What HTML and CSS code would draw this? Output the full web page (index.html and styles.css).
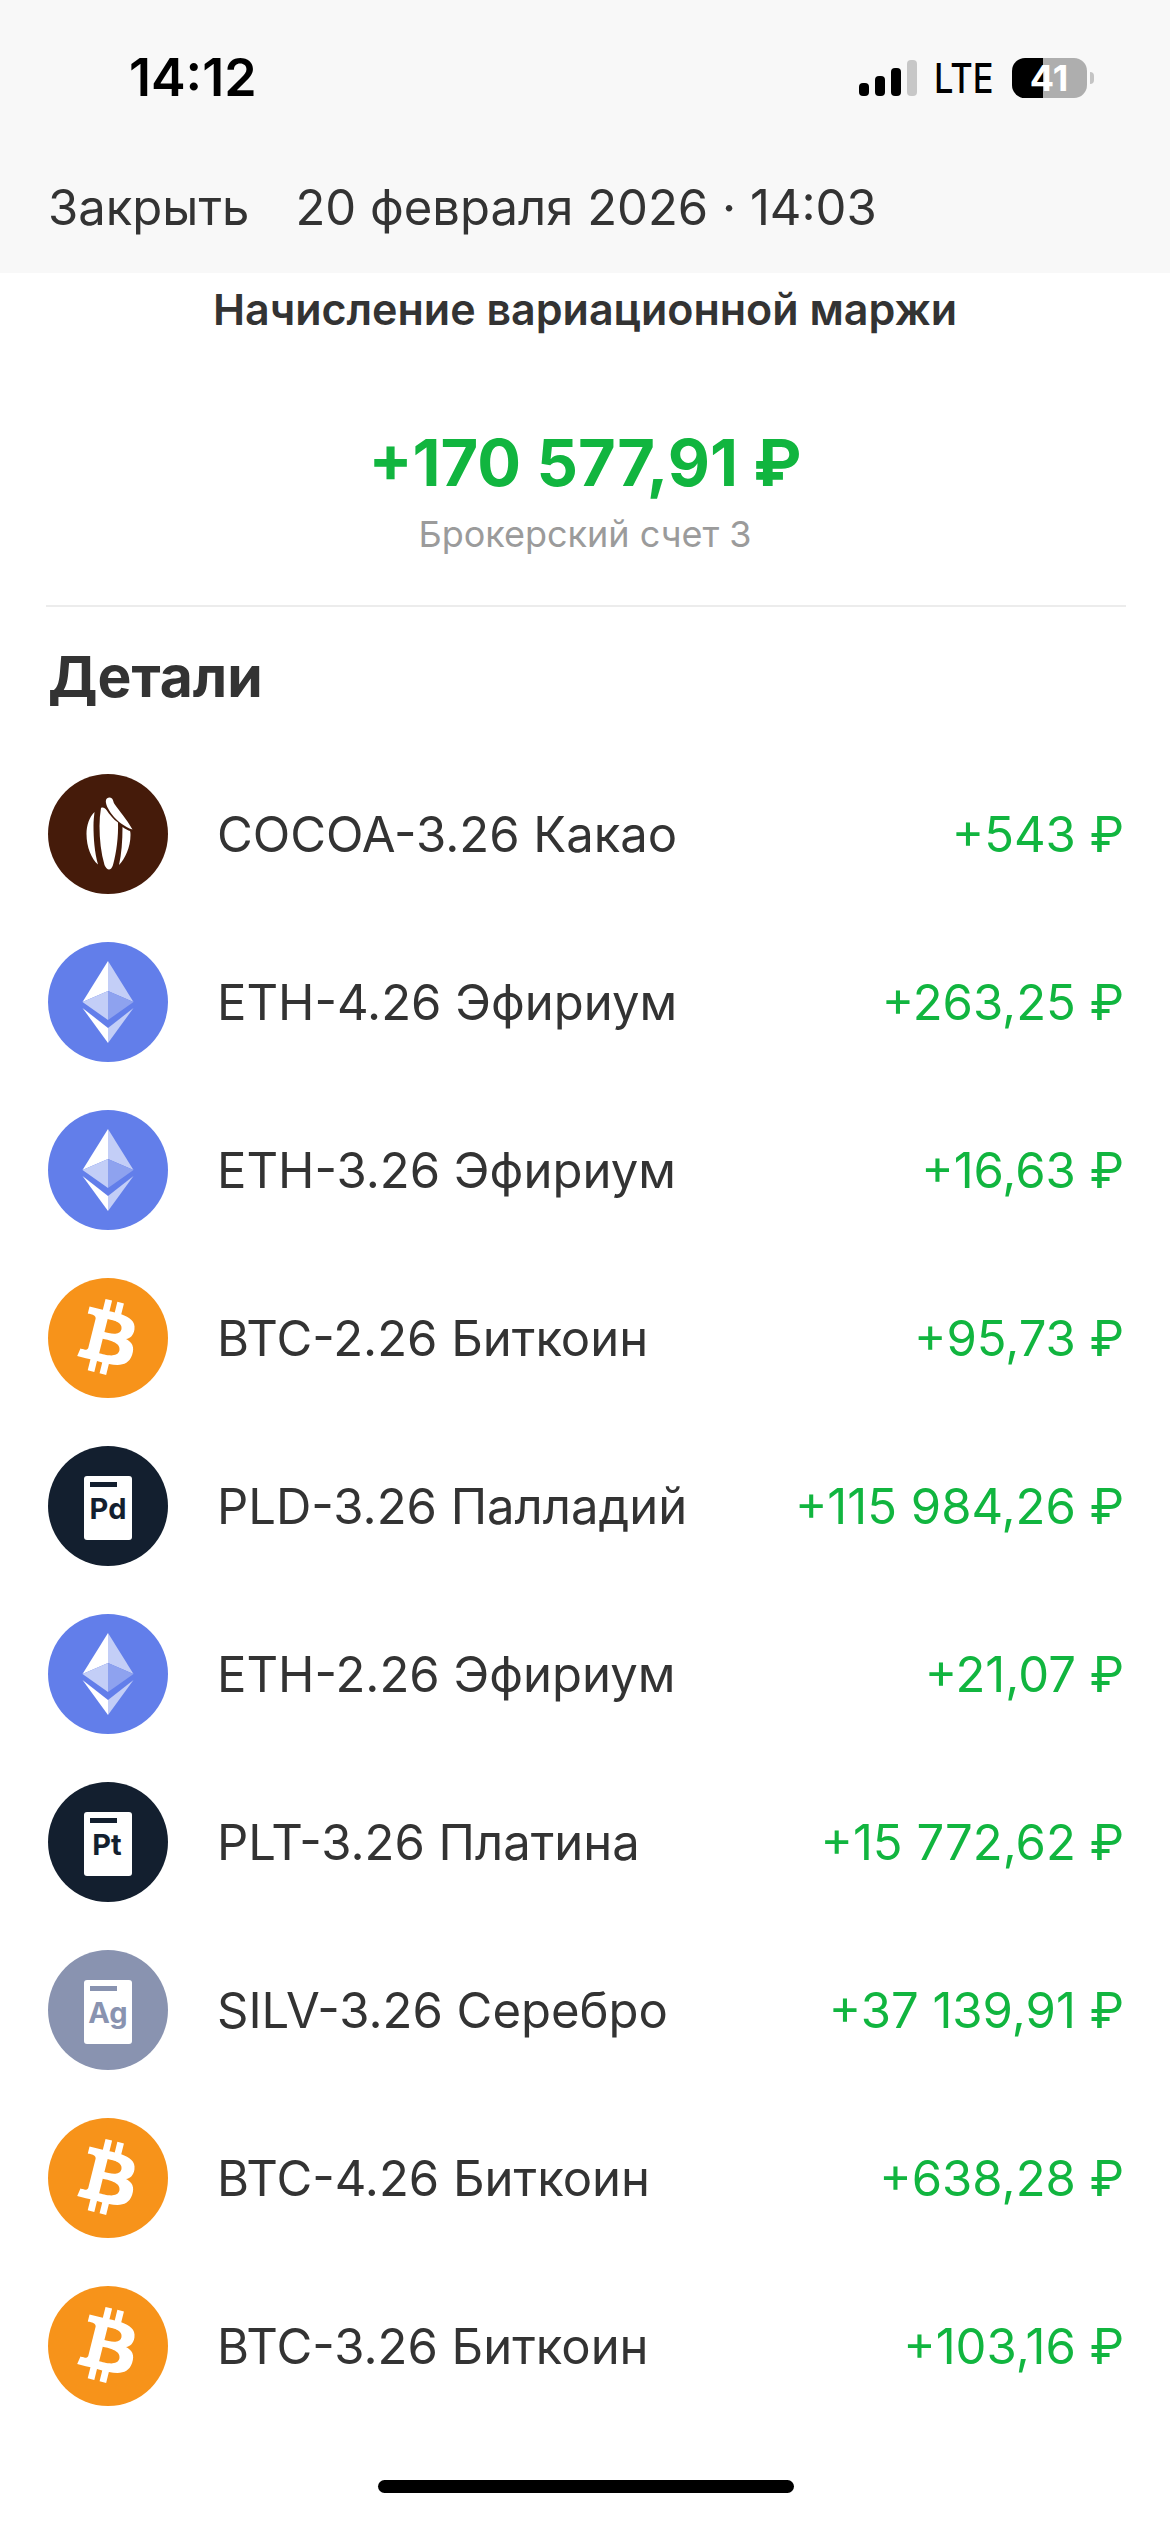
FILE: index.html
```html
<!DOCTYPE html>
<html lang="ru">
<head>
<meta charset="utf-8">
<title>Начисление вариационной маржи</title>
<link rel="stylesheet" href="styles.css">
</head>
<body>
<svg class="defs" width="0" height="0" aria-hidden="true">
  <symbol id="btc" viewBox="0 0 64 64">
    <circle cx="32" cy="32" r="32" fill="#f7931a"/>
    <path fill="#fff" d="M46.103 27.444c.637-4.258-2.605-6.547-7.038-8.074l1.438-5.768-3.511-.875-1.4 5.616c-.923-.23-1.871-.447-2.813-.662l1.41-5.653-3.509-.875-1.439 5.766c-.764-.174-1.514-.346-2.242-.527l.004-.018-4.842-1.209-.934 3.75s2.605.597 2.55.634c1.422.355 1.679 1.296 1.636 2.042l-1.638 6.571c.098.025.225.061.365.117l-.371-.092-2.296 9.205c-.174.432-.615 1.08-1.609.834.035.051-2.552-.637-2.552-.637l-1.743 4.019 4.569 1.139c.85.213 1.683.436 2.503.646l-1.453 5.834 3.507.875 1.439-5.772c.958.26 1.888.5 2.798.726l-1.434 5.745 3.511.875 1.453-5.823c5.987 1.133 10.489.676 12.384-4.739 1.527-4.36-.076-6.875-3.226-8.515 2.294-.529 4.022-2.038 4.483-5.155zm-8.022 11.249c-1.085 4.36-8.426 2.003-10.806 1.412l1.928-7.729c2.38.594 10.012 1.77 8.878 6.317zm1.086-11.312c-.99 3.966-7.1 1.951-9.082 1.457l1.748-7.008c1.982.494 8.365 1.416 7.334 5.551z"/>
  </symbol>
  <symbol id="eth" viewBox="0 0 120 120">
    <circle cx="60" cy="60" r="60" fill="#627eea"/>
    <path fill="#fff" d="M60 19 34.500 60 60 49z"/>
    <path fill="#c3cef7" d="M60 19 85.500 60 60 49z"/>
    <path fill="#c3cef7" d="M60 49 34.500 60 60 78z"/>
    <path fill="#8ea2ef" d="M60 49 85.500 60 60 78z"/>
    <path fill="#fff" d="M34.500 66 60 86v15z"/>
    <path fill="#c3cef7" d="M85.500 66 60 86v15z"/>
  </symbol>
  <symbol id="cocoa" viewBox="0 0 120 120">
    <circle cx="60" cy="60" r="60" fill="#451b0a"/>
    <path fill="#fff" d="M58 26c.5-2.500 4-3.500 6-1.500 1.500 1.500 1 3.500 2.500 5.500 5 7 12 15 18 25.500-8-2.500-15.500-8.500-20.500-15-3.500-4.500-7-11-6-14.500z"/>
    <path fill="#fff" d="M53 34c2-1 4 0 5.500 2 3 4.500 7 9.500 11.500 12.500 .5 14-1.500 30-5 42.500-1 3-2.500 4.500-4 4.500s-3.500-2-4.500-4.500C53 79 51.500 65 51.500 52c0-6 .5-12 1.500-18z"/>
    <path fill="#fff" d="M46.500 38c-5 5-8 13-8 22 0 13 5 25 11.500 30.500C46.500 78 45.500 64 45.500 52c0-5 .5-9.500 1-14z"/>
    <path fill="#fff" d="M74.500 53c3 2 5.500 3.500 7.500 4 .5 1.500.5 2.500.5 4 0 12-5.500 24-11.500 30 2.500-11 3.500-24 3.500-38z"/>
  </symbol>
</svg>

<header class="top">
  <div class="status">
    <span class="time">14:12</span>
    <div class="status-right">
      <div class="signal">
        <i class="bar b1"></i><i class="bar b2"></i><i class="bar b3"></i><i class="bar b4"></i>
      </div>
      <span class="lte">LTE</span>
      <div class="battery"><span>41</span></div>
      <i class="nub"></i>
    </div>
  </div>
  <div class="nav">
    <span class="close">Закрыть</span>
    <span class="date">20 февраля 2026 · 14:03</span>
  </div>
</header>

<main class="content">
  <h1 class="title">Начисление вариационной маржи</h1>
  <div class="sum">+170 577,91 ₽</div>
  <div class="account">Брокерский счет 3</div>
  <hr class="rule">
  <h2 class="details">Детали</h2>
  <ul class="list">
    <li class="row"><svg class="logo"><use href="#cocoa"/></svg><span class="name">COCOA-3.26 Какао</span><span class="amt">+543 ₽</span></li>
    <li class="row"><svg class="logo"><use href="#eth"/></svg><span class="name">ETH-4.26 Эфириум</span><span class="amt">+263,25 ₽</span></li>
    <li class="row"><svg class="logo"><use href="#eth"/></svg><span class="name">ETH-3.26 Эфириум</span><span class="amt">+16,63 ₽</span></li>
    <li class="row"><svg class="logo"><use href="#btc"/></svg><span class="name">BTC-2.26 Биткоин</span><span class="amt">+95,73 ₽</span></li>
    <li class="row">
      <svg class="logo" viewBox="0 0 120 120"><circle cx="60" cy="60" r="60" class="dark"/><rect x="36" y="30" width="48" height="64" rx="3" fill="#fff"/><rect x="42" y="36" width="27" height="5" class="dark"/><text x="60" y="73" text-anchor="middle" class="metal dark">Pd</text></svg>
      <span class="name">PLD-3.26 Палладий</span><span class="amt">+115 984,26 ₽</span></li>
    <li class="row"><svg class="logo"><use href="#eth"/></svg><span class="name">ETH-2.26 Эфириум</span><span class="amt">+21,07 ₽</span></li>
    <li class="row">
      <svg class="logo" viewBox="0 0 120 120"><circle cx="60" cy="60" r="60" class="dark"/><rect x="36" y="30" width="48" height="64" rx="3" fill="#fff"/><rect x="42" y="36" width="27" height="5" class="dark"/><text x="59" y="73" text-anchor="middle" class="metal dark">Pt</text></svg>
      <span class="name">PLT-3.26 Платина</span><span class="amt">+15 772,62 ₽</span></li>
    <li class="row">
      <svg class="logo" viewBox="0 0 120 120"><circle cx="60" cy="60" r="60" class="silver"/><rect x="36" y="30" width="48" height="64" rx="3" fill="#fff"/><rect x="42" y="36" width="27" height="5" class="silver"/><text x="60" y="73" text-anchor="middle" class="metal silver">Ag</text></svg>
      <span class="name">SILV-3.26 Серебро</span><span class="amt">+37 139,91 ₽</span></li>
    <li class="row"><svg class="logo"><use href="#btc"/></svg><span class="name">BTC-4.26 Биткоин</span><span class="amt">+638,28 ₽</span></li>
    <li class="row"><svg class="logo"><use href="#btc"/></svg><span class="name">BTC-3.26 Биткоин</span><span class="amt">+103,16 ₽</span></li>
  </ul>
  <div class="home"></div>
</main>
</body>
</html>
```
FILE: styles.css
```css
* { box-sizing: border-box; }
html, body { margin: 0; padding: 0; }
body {
  width: 1170px;
  height: 2532px;
  overflow: hidden;
  background: #fff;
  color: #333;
  font-family: Inter, "Noto Sans", sans-serif;
}
.defs { position: absolute; }
.metal { font: 700 29px Inter, sans-serif; }
.dark { fill: #131f2f; }
.silver { fill: #8993b0; }

.top { height: 273px; background: #f8f8f8; }
.status { height: 178px; display: flex; align-items: flex-start; padding-top: 50px; }
.time { margin-left: 129px; font-size: 52px; line-height: 56px; font-weight: 600; color: #000; }
.status-right { margin-left: 602px; display: flex; align-items: center; height: 56px; }
.signal { display: flex; align-items: flex-end; gap: 6px; height: 36px; }
.bar { display: block; width: 10px; border-radius: 4px; background: #000; }
.b1 { height: 13px; }
.b2 { height: 20px; }
.b3 { height: 28px; }
.b4 { height: 36px; background: #c7c7c7; }
.lte { margin-left: 17px; font-size: 41px; line-height: 40px; font-weight: 500; color: #000; width: 78px; transform: scaleX(0.84); transform-origin: left center; }
.battery {
  width: 75px; height: 40px; border-radius: 13px;
  background: linear-gradient(90deg, #000 41%, #aeaeae 41%);
  display: flex; align-items: center; justify-content: center;
  color: #fff; font-size: 36px; font-weight: 700;
}
.nub { display: block; width: 4px; height: 12px; margin-left: 3px; background: #c4c4c4; border-radius: 0 4px 4px 0; }

.nav { display: flex; align-items: center; height: 60px; padding-left: 48px; font-size: 49px; line-height: 60px; color: #333; }
.date { margin-left: 46px; }

.content { display: flex; flex-direction: column; }
.title { margin: 12px 0 0; text-align: center; font-size: 43px; line-height: 48px; font-weight: 600; color: #333; }
.sum { margin-top: 90px; text-align: center; font-size: 65px; line-height: 80px; font-weight: 700; color: #11b53f; }
.account { margin-top: 9px; text-align: center; font-size: 36px; line-height: 44px; color: #9b9b9b; }
.rule { margin: 49px 44px 0 46px; border: 0; height: 2px; background: #ececec; }
.details { margin: 36px 0 0 48px; font-size: 57px; line-height: 68px; font-weight: 700; color: #333; }
.list { list-style: none; margin: 39px 0 0; padding: 0 48px; }
.row { display: flex; align-items: center; height: 168px; }
.logo { width: 120px; height: 120px; flex: none; }
.name { margin-left: 49px; font-size: 49px; color: #333; flex: 1; }
.amt { font-size: 49px; color: #11b53f; margin-right: -2px; }
.home { width: 416px; height: 13px; margin: 50px 0 0 378px; background: #000; border-radius: 7px; }
```
